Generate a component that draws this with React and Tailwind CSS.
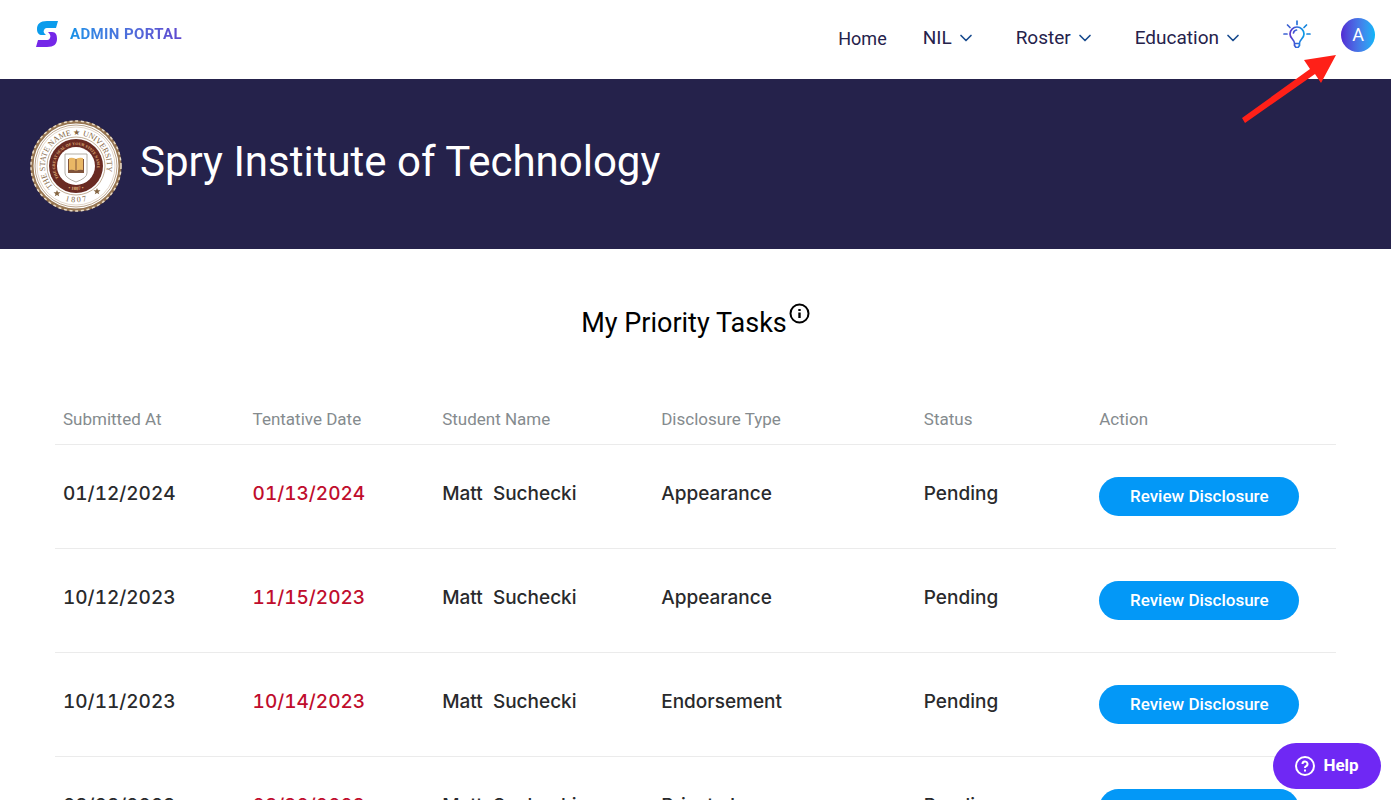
import { ChevronDown } from "lucide-react";

const navItems = ["NIL", "Roster", "Education"];

const columns = [
  "Submitted At",
  "Tentative Date",
  "Student Name",
  "Disclosure Type",
  "Status",
  "Action",
];

const tasks = [
  { id: 1, submitted: "01/12/2024", tentative: "01/13/2024", type: "Appearance" },
  { id: 2, submitted: "10/12/2023", tentative: "11/15/2023", type: "Appearance" },
  { id: 3, submitted: "10/11/2023", tentative: "10/14/2023", type: "Endorsement" },
  { id: 4, submitted: "08/28/2023", tentative: "08/30/2023", type: "Private Lesson" },
];

function Logo() {
  return (
    <svg className="h-[26px] w-6" viewBox="0 0 24 26" aria-hidden="true">
      <path
        d="M23 0H12C5 0 2 3 2 8c0 4 2 6 5 6h4c-2-2-3-3-2-5 1-2 2-2 4-2h8z"
        fill="#0b9cec"
      />
      <path
        d="M1 26h11c7 0 10-3 10-8 0-4-1-7-5-7h-4c2 2 3 4 2 6-1 2-2 2-4 2H3z"
        fill="#7427e8"
      />
    </svg>
  );
}

function Seal() {
  return (
    <svg
      className="h-24 w-24 shrink-0"
      viewBox="0 0 96 96"
      role="img"
      aria-label="University seal"
    >
      <defs>
        <path id="sealOuter" d="M25 68.700A31 31 0 1 1 77 58.700" />
        <path id="sealYear" d="M29 79A37 37 0 0 0 67 79" />
        <path id="sealInner" d="M30.800 60A21 21 0 1 1 65.200 60" />
        <path id="sealInnerYear" d="M36 69A24 24 0 0 0 60 69" />
      </defs>
      <circle cx="48" cy="48" r="44" fill="#fff" />
      <circle cx="48" cy="48" r="44" fill="none" stroke="#967551" strokeWidth="3" />
      <circle
        cx="48"
        cy="48"
        r="45"
        fill="none"
        stroke="#e9dcc8"
        strokeWidth="1.5"
        strokeDasharray="3 2.7"
      />
      <circle cx="48" cy="48" r="41" fill="none" stroke="#a98c6c" strokeWidth="0.8" />
      <circle cx="48" cy="48" r="39" fill="none" stroke="#c4ad93" strokeWidth="0.5" />
      <circle cx="48" cy="48" r="29" fill="none" stroke="#a98c6c" strokeWidth="0.7" />
      <circle cx="48" cy="48" r="27" fill="#692a22" />
      <circle cx="48" cy="48" r="19" fill="#fff" />
      <g fontFamily="Liberation Serif, serif">
        <text fontSize="8" fill="#846542">
          <textPath href="#sealOuter">THE STATE NAME ★ UNIVERSITY</textPath>
        </text>
        <text fontSize="8" fill="#846542" textAnchor="middle">
          <textPath href="#sealYear" startOffset="50%">
            1 8 0 7
          </textPath>
        </text>
        <text fontSize="4" fontWeight="bold" fill="#e0b27a">
          <textPath href="#sealInner">THE GREAT SEAL OF YOUR STATE NAME</textPath>
        </text>
        <text fontSize="5" fontWeight="bold" fill="#e0b27a" textAnchor="middle">
          <textPath href="#sealInnerYear" startOffset="50%">
            • 1807 •
          </textPath>
        </text>
      </g>
      <g fill="#846542">
        <path id="sealStar" d="M29 72l1 2.300h2.500l-2 1.600.7 2.400-2.200-1.400-2.200 1.400.7-2.400-2-1.600H28z" />
        <use href="#sealStar" x="40" y="-2" />
      </g>
      <path d="M37 36h22v19q0 5-11 9q-11-4-11-9z" fill="#fff" stroke="#a9a49b" strokeWidth="0.9" />
      <path d="M40 41h16v14H40z" fill="#80543b" />
      <path d="M41 40q4-1 7 1q3-2 7-1v12q-4-1-7 1q-3-2-7-1z" fill="#e9b765" />
      <path d="M48 41v12" stroke="#80543b" strokeWidth="1" />
    </svg>
  );
}

function LightBulb() {
  return (
    <svg
      className="h-7 w-7"
      viewBox="0 0 28 28"
      fill="none"
      stroke="url(#bulbGradient)"
      strokeWidth="1.7"
      strokeLinecap="round"
      strokeLinejoin="round"
      aria-hidden="true"
    >
      <defs>
        <linearGradient id="bulbGradient" gradientUnits="userSpaceOnUse" x1="7" y1="0" x2="21" y2="0">
          <stop offset="0" stopColor="#5a35cc" />
          <stop offset="1" stopColor="#0a9be6" />
        </linearGradient>
      </defs>
      <path d="M11.500 23.500c0-4-4.500-5-4.500-9.500a7 7 0 0 1 14 0c0 4.500-4.500 5.500-4.500 9.500zM11.500 23.500v2l1.500 2h2l1.500-2v-2" />
      <path d="M10.500 13a3.500 3.500 0 0 1 3-3" />
      <path d="M14 1v3.500" stroke="#2673d9" />
      <path d="M4.500 5l2.500 2.500M1 14h3" stroke="#3c62d2" />
      <path d="M23.500 5L21 7.500M24 14h3" stroke="#1685dd" />
    </svg>
  );
}

function ReviewButton() {
  return (
    <button
      type="button"
      className="mt-2 block h-[39px] w-[200px] rounded-full bg-[#0398f7] pt-0.5 font-[Roboto] text-[17px] font-medium text-white"
    >
      Review Disclosure
    </button>
  );
}

export default function App() {
  return (
    <div className="relative bg-white font-[Roboto,sans-serif] text-[#25224b]">
      {/* Top bar */}
      <header className="flex h-[79px] items-start justify-between pl-[35px] pr-4">
        <a href="#" className="mt-[21px] flex items-center gap-[11px]">
          <Logo />
          <span className="bg-linear-to-r from-[#1092e8] to-[#5f48cf] bg-clip-text text-[15px] font-bold tracking-wide text-transparent">
            ADMIN PORTAL
          </span>
        </a>

        <nav className="flex items-start">
          <a href="#" className="mr-9 mt-[25px] text-lg">Home</a>

          {navItems.map((item) => (
            <button
              key={item}
              type="button"
              className="mr-10 mt-6 flex items-center gap-1 text-[19px] leading-7"
            >
              {item}
              <ChevronDown className="size-5 text-[#174a8e]" />
            </button>
          ))}

          <button type="button" aria-label="Tips" className="mr-[30px] mt-5">
            <LightBulb />
          </button>
          <button
            type="button"
            className="mt-[18px] size-[34px] rounded-full bg-linear-to-r from-[#5126d3] to-[#00b5f8] text-lg text-white"
          >
            A
          </button>
        </nav>
      </header>

      {/* Arrow pointing at the account button */}
      <svg
        className="pointer-events-none absolute right-[54px] top-[54px] h-[70px] w-[95px]"
        viewBox="0 0 95 70"
        aria-hidden="true"
      >
        <path d="M0 64L68 15L62 6L94 1L79 29L73 20L3 69z" fill="#ff2018" />
      </svg>

      {/* School banner */}
      <section className="flex h-[170px] items-start gap-4 bg-[#25224b] pl-7 pt-[39px]">
        <Seal />
        <h1 className="mt-5 text-[42px] leading-[48px] text-white">
          Spry Institute of Technology
        </h1>
      </section>

      {/* Tasks */}
      <main className="px-[55px] pt-[52px] font-[Inter,sans-serif]">
        <div className="flex items-start justify-center gap-0.5 text-black">
          <h2 className="font-[Roboto] text-[27px] leading-[44px]">
            My Priority Tasks
          </h2>
          <button type="button" aria-label="About priority tasks">
            <svg className="mt-0.5 size-[21px]" viewBox="0 0 21 21" fill="none" stroke="currentColor" strokeWidth="2">
              <circle cx="10.5" cy="10.5" r="9" />
              <path d="M10.500 9.500v5.500M10.500 6v2" strokeWidth="2.4" />
            </svg>
          </button>
        </div>

        <table className="mt-12 w-full table-fixed text-left">
          <colgroup>
            <col className="w-[14.8%]" />
            <col className="w-[14.8%]" />
            <col className="w-[17.1%]" />
            <col className="w-[20.5%]" />
            <col className="w-[13.7%]" />
            <col />
          </colgroup>
          <thead>
            <tr className="h-[51px] border-b border-[#ebebeb] font-[Roboto] text-[17px] text-[#858b8e]">
              {columns.map((column) => (
                <th key={column} className="px-2 pt-0.5 font-normal">
                  {column}
                </th>
              ))}
            </tr>
          </thead>
          <tbody>
            {tasks.map((task) => (
              <tr
                key={task.id}
                className="h-[104px] border-b border-[#ebebeb] text-[19px] font-medium tabular-nums text-[#292a2c]"
              >
                <td className="px-2 pb-1">{task.submitted}</td>
                <td className="px-2 pb-1 text-[#c00d2d]">{task.tentative}</td>
                <td className="whitespace-pre px-2 pb-1">{"Matt  Suchecki"}</td>
                <td className="px-2 pb-1">{task.type}</td>
                <td className="px-2 pb-1">Pending</td>
                <td className="px-2 pb-2">
                  <ReviewButton />
                </td>
              </tr>
            ))}
          </tbody>
        </table>
      </main>

      <button
        type="button"
        className="fixed bottom-[11px] right-2.5 flex h-[46px] w-[108px] items-center justify-center gap-2 rounded-full bg-[#6f28f4] text-[17px] font-bold text-white"
      >
        <svg className="size-5" viewBox="0 0 20 20" fill="none" stroke="currentColor" strokeWidth="2" aria-hidden="true">
          <circle cx="10" cy="10" r="9" />
          <path d="M7.500 8a2.500 2.500 0 1 1 3.500 2.300q-1 .4-1 1.700M10 13.500v2" />
        </svg>
        Help
      </button>
    </div>
  );
}
